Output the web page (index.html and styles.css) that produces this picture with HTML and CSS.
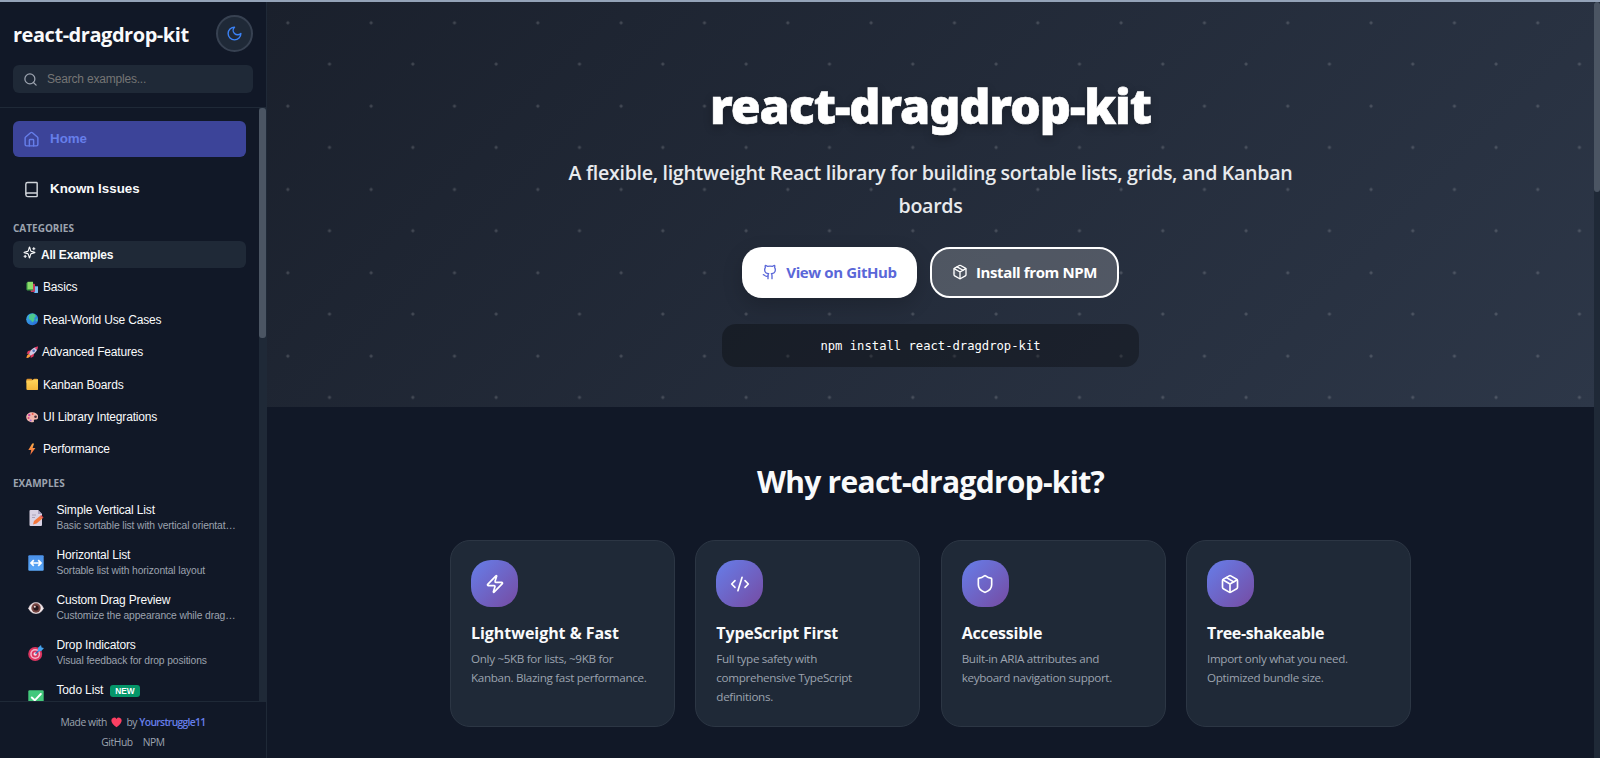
FILE: index.html
```html
<!DOCTYPE html>
<html lang="en">
<head>
<meta charset="utf-8">
<title>react-dragdrop-kit</title>
<link rel="stylesheet" href="styles.css">
</head>
<body>
<svg class="defs" width="0" height="0" aria-hidden="true">
  <symbol id="i-package" viewBox="0 0 24 24"><path d="m7.5 4.27 9 5.15"/><path d="M21 8a2 2 0 0 0-1-1.73l-7-4a2 2 0 0 0-2 0l-7 4A2 2 0 0 0 3 8v8a2 2 0 0 0 1 1.73l7 4a2 2 0 0 0 2 0l7-4A2 2 0 0 0 21 16Z"/><path d="m3.3 7 8.7 5 8.7-5M12 22V12"/></symbol>
  <linearGradient id="g-globe" x1="0" y1="0" x2="1" y2="1"><stop offset="0" stop-color="#3fb4e8"/><stop offset="1" stop-color="#2463d8"/></linearGradient>
  <linearGradient id="g-folder" x1="0" y1="0" x2="0" y2="1"><stop offset="0" stop-color="#ffd65c"/><stop offset="1" stop-color="#f5b73b"/></linearGradient>
  <linearGradient id="g-bolt" x1="0" y1="0" x2="0" y2="1"><stop offset="0" stop-color="#ffb04a"/><stop offset="1" stop-color="#f0603a"/></linearGradient>
  <linearGradient id="g-blue" x1="0" y1="0" x2="0" y2="1"><stop offset="0" stop-color="#4a90e8"/><stop offset="1" stop-color="#5aa8f8"/></linearGradient>
</svg>
<div class="stripe"></div>
<div class="app">
  <aside class="sidebar">
    <header class="side-head">
      <div class="brand-row">
        <div class="brand">react-dragdrop-kit</div>
        <button class="theme"><svg class="ic" viewBox="0 0 24 24" width="17" height="17"><path d="M12 3a6 6 0 0 0 9 9 9 9 0 1 1-9-9Z"/></svg></button>
      </div>
      <div class="search"><svg class="ic" viewBox="0 0 24 24" width="15" height="15"><circle cx="11" cy="11" r="8"/><path d="m21 21-4.3-4.3"/></svg><span>Search examples...</span></div>
    </header>
    <div class="side-body">
      <nav class="nav">
        <a class="link active"><svg class="ic" viewBox="0 0 24 24" width="17" height="17"><path d="M15 21v-8a1 1 0 0 0-1-1h-4a1 1 0 0 0-1 1v8"/><path d="M3 10a2 2 0 0 1 .709-1.528l7-5.999a2 2 0 0 1 2.582 0l7 5.999A2 2 0 0 1 21 10v9a2 2 0 0 1-2 2H5a2 2 0 0 1-2-2z"/></svg><span>Home</span></a>
        <a class="link"><svg class="ic" viewBox="0 0 24 24" width="17" height="17"><path d="M4 19.5v-15A2.5 2.5 0 0 1 6.5 2H19a1 1 0 0 1 1 1v18a1 1 0 0 1-1 1H6.5a1 1 0 0 1 0-5H20"/></svg><span>Known Issues</span></a>
        <h4 class="label">CATEGORIES</h4>
        <a class="all"><svg class="ic" viewBox="0 0 24 24" width="13" height="13"><path d="M9.937 15.5A2 2 0 0 0 8.5 14.063l-6.135-1.582a.5.5 0 0 1 0-.962L8.5 9.936A2 2 0 0 0 9.937 8.5l1.582-6.135a.5.5 0 0 1 .963 0L14.063 8.5A2 2 0 0 0 15.5 9.937l6.135 1.581a.5.5 0 0 1 0 .964L15.5 14.063a2 2 0 0 0-1.437 1.437l-1.582 6.135a.5.5 0 0 1-.963 0z"/><path d="M20 3v4M22 5h-4M4 17v4M6 19H2"/></svg><span>All Examples</span></a>
        <ul class="cats">
          <li><svg viewBox="0 0 16 16"><path fill="#3f86d8" d="M10 6l5.500 1v8L10 16z"/><path fill="#7cc0f5" d="M11.500 7.500l4-.5v8l-4 .5z"/><rect x="6" y="3.500" width="5.500" height="10.500" rx="1" fill="#c93a5f"/><path fill="#3d9c45" d="M.5 2.500 2 1.500h7v10.500H1.500l-1-1z"/><path fill="#8bdc6a" d="M2 1h7v9.500H2z"/></svg>Basics</li>
          <li><svg viewBox="0 0 16 16"><circle cx="8" cy="8" r="7.700" fill="url(#g-globe)"/><path fill="#4cc98c" d="M4 3.500C6 .8 10 .6 11.500 1.700L12.500 5l-2 1.200.5 2.300-2.500 3.500L6.500 9.500 3.500 7.500z"/><path fill="#3fc0a0" d="M12.500 7.500l2.500-.5-.8 3.500-1.700.5z"/></svg>Real-World Use Cases</li>
          <li><svg viewBox="0 0 16 16"><path fill="#e0395f" d="M6.500 5.500 2.500 6.500.8 10l4 .2zM10.500 9.500l-1 4L6 15.300l-.2-4z"/><path fill="#ff9a3c" d="M3.800 10.200C1.500 11 .8 13 .5 15.500c2.500-.3 4.500-1 5.300-3.300z"/><path fill="#cfc8e4" d="M4 10.500C5 6 8.500 1.800 13 1.500l1.500 1.500C14.200 7.500 10 11 5.500 12z"/><path fill="#e83e6a" d="M11 2.200C12.600 1 14.500.6 15.500.5c-.1 1-.5 2.900-1.700 4.500z"/><circle cx="9.800" cy="6.200" r="1.700" fill="#5673b8"/></svg><span class="tight">Advanced Features</span></li>
          <li><svg viewBox="0 0 16 16"><path fill="#dc9430" d="M.5 2.500A1.500 1.500 0 0 1 2 1h5l1.500 1.500L10.500 1H14a1.500 1.500 0 0 1 1.500 1.500V6H.5z"/><path fill="url(#g-folder)" d="M.5 3.200h7.300l2-1.400h5.700v12a1.500 1.500 0 0 1-1.500 1.500H2a1.500 1.500 0 0 1-1.500-1.500z"/></svg>Kanban Boards</li>
          <li><svg viewBox="0 0 16 16"><path fill="#f0b5ab" d="M8 1.500c4.500 0 7.700 2.700 7.700 6 0 2.500-1.800 3.500-3.700 3.300-1.700-.2-2.300.7-1.800 1.900.4 1-.5 1.800-2 1.800C3.500 14.500.3 11.500.3 7.800S3.600 1.500 8 1.500z"/><circle cx="4.200" cy="5.200" r="1.500" fill="#c33fa6"/><circle cx="8.500" cy="3.900" r="1.200" fill="#ee5a4a"/><circle cx="3.300" cy="9" r="1.300" fill="#e0457f"/><circle cx="6" cy="12" r="1.200" fill="#9a62dd"/><circle cx="12.200" cy="7.300" r="1.700" fill="#472e3a"/></svg>UI Library Integrations</li>
          <li><svg viewBox="0 0 16 16"><path fill="url(#g-bolt)" d="M8 .5 3 9h3.700L5.500 15.500 12 6.500H8.500L10.300.5z"/></svg>Performance</li>
        </ul>
        <h4 class="label second">EXAMPLES</h4>
        <ul class="examples">
          <li><svg viewBox="0 0 16 16"><path fill="#d9d2e4" d="M1.500 1a1 1 0 0 1 1-1H10l4 4v11a1 1 0 0 1-1 1H2.500a1 1 0 0 1-1-1z"/><path fill="#a79fbd" d="M10 0l4 4h-4z"/><path d="M4 5h4M4 7.500h3" stroke="#aaa2b8"/><path fill="#f4763c" d="M5 14.500 6 11l6-5 2.500 2.500-6 5z"/><path fill="#d94b4b" d="M12 6l1.200-1 2.300 2.500-1 1z"/></svg><div><b>Simple Vertical List</b><small>Basic sortable list with vertical orientat…</small></div></li>
          <li><svg viewBox="0 0 16 16"><rect x=".3" y=".3" width="15.400" height="15.400" rx="1" fill="url(#g-blue)"/><path d="M3.500 8h9M5.800 5.200 3 8l2.800 2.800M10.200 5.200 13 8l-2.800 2.800" fill="none" stroke="#fff" stroke-width="1.700"/></svg><div><b>Horizontal List</b><small>Sortable list with horizontal layout</small></div></li>
          <li><svg viewBox="0 0 16 16"><path fill="#d8c9ce" d="M.3 8.300C2 4 5 2.200 8 2.200S14 4 15.700 8.300C14 12.300 11 14 8 14S2 12.300.3 8.300z"/><path fill="#f4edf0" d="M1 8.500c2-3.500 4-4.700 7-4.700s5 1.200 7 4.700c-2 3.400-4 4.300-7 4.300S3 11.900 1 8.500z"/><circle cx="8" cy="8" r="4.700" fill="#74423f"/><circle cx="8" cy="8" r="2.600" fill="#26161b"/><circle cx="6.800" cy="6.700" r="1" fill="#e8d5d4"/></svg><div><b>Custom Drag Preview</b><small>Customize the appearance while drag…</small></div></li>
          <li><svg viewBox="0 0 16 16"><circle cx="7.200" cy="9" r="7" fill="#dc3560"/><circle cx="7.200" cy="9" r="5" fill="#f4b6cb"/><circle cx="7.200" cy="9" r="3.500" fill="#dc3560"/><circle cx="7.200" cy="9" r="1.700" fill="#f8dbe4"/><path d="M7.500 8.700 12 4.200" stroke="#2e6fc0" stroke-width="1.300"/><path fill="#45a3ee" d="M10 6V2.700L13 0l.6 2.400L16 3l-2.700 3z"/></svg><div><b>Drop Indicators</b><small>Visual feedback for drop positions</small></div></li>
          <li><svg viewBox="0 0 16 16"><rect x=".3" y=".3" width="15.400" height="15.400" rx="1.200" fill="#43c87c"/><path d="M3.800 7.500 6.800 10.300 12.800 4" fill="none" stroke="#fff" stroke-width="1.900" stroke-linecap="round"/></svg><div><b>Todo List<i class="new">NEW</i></b><small></small></div></li>
        </ul>
      </nav>
      <div class="track"><div class="thumb side"></div></div>
    </div>
    <footer class="side-foot">
      <p>Made with <svg class="heart" viewBox="0 0 16 16" width="11" height="11"><path fill="#fb3f62" d="M8 15C3 11 .5 8.200.5 5A4 4 0 0 1 8 3a4 4 0 0 1 7.500 2c0 3.200-2.500 6-7.500 10z"/></svg> by <a>Yourstruggle11</a></p>
      <p class="links"><span>GitHub</span><span>NPM</span></p>
    </footer>
  </aside>
  <main class="main">
    <section class="hero">
      <h1>react-dragdrop-kit</h1>
      <p class="sub">A flexible, lightweight React library for building sortable lists, grids, and Kanban boards</p>
      <div class="btns">
        <a class="btn white"><svg class="ic" viewBox="0 0 24 24" width="16" height="16"><path d="M15 22v-4a4.8 4.8 0 0 0-1-3.500c3 0 6-2 6-5.500.08-1.250-.27-2.480-1-3.500.28-1.150.28-2.350 0-3.500 0 0-1 0-3 1.500-2.640-.5-5.360-.5-8 0C6 2 5 2 5 2c-.3 1.150-.3 2.350 0 3.500A5.403 5.403 0 0 0 4 9c0 3.500 3 5.500 6 5.500-.39.49-.68 1.050-.85 1.650-.17.6-.22 1.230-.15 1.850v4"/><path d="M9 18c-4.510 2-5-2-7-2"/></svg><span>View on GitHub</span></a>
        <a class="btn glass"><svg class="ic" width="16" height="16"><use href="#i-package"/></svg><span>Install from NPM</span></a>
      </div>
      <code class="cmd">npm install react-dragdrop-kit</code>
    </section>
    <section class="features">
      <h2>Why react-dragdrop-kit?</h2>
      <div class="grid">
        <article class="card"><div class="tile"><svg class="ic" viewBox="0 0 24 24" width="20" height="20"><path d="M4 14a1 1 0 0 1-.78-1.630l9.900-10.200a.5.5 0 0 1 .86.460l-1.920 6.020A1 1 0 0 0 13 10h7a1 1 0 0 1 .78 1.630l-9.900 10.200a.5.5 0 0 1-.86-.460l1.920-6.020A1 1 0 0 0 11 14z"/></svg></div><h3 class="wide">Lightweight &amp; Fast</h3><p>Only ~5KB for lists, ~9KB for<br>Kanban. Blazing fast performance.</p></article>
        <article class="card"><div class="tile"><svg class="ic" viewBox="0 0 24 24" width="20" height="20"><path d="m18 16 4-4-4-4M6 8l-4 4 4 4M14.500 4l-5 16"/></svg></div><h3 class="mid">TypeScript First</h3><p>Full type safety with<br>comprehensive TypeScript<br>definitions.</p></article>
        <article class="card"><div class="tile"><svg class="ic" viewBox="0 0 24 24" width="20" height="20"><path d="M20 13c0 5-3.500 7.500-7.660 8.950a1 1 0 0 1-.67-.010C7.500 20.500 4 18 4 13V6a1 1 0 0 1 1-1c2 0 4.500-1.200 6.240-2.720a1.170 1.170 0 0 1 1.520 0C14.510 3.810 17 5 19 5a1 1 0 0 1 1 1z"/></svg></div><h3 class="mid">Accessible</h3><p>Built-in ARIA attributes and<br>keyboard navigation support.</p></article>
        <article class="card"><div class="tile"><svg class="ic" width="20" height="20"><use href="#i-package"/></svg></div><h3>Tree-shakeable</h3><p>Import only what you need.<br>Optimized bundle size.</p></article>
      </div>
    </section>
  </main>
  <div class="track page"><div class="thumb"></div></div>
</div>
</body>
</html>
```

FILE: styles.css
```css
* { box-sizing: border-box; margin: 0; padding: 0; }
body {
  width: 1600px; height: 758px; overflow: hidden;
  display: flex; flex-direction: column;
  background: #111827; color: #f9fafb;
  font-family: "Open Sans", "Noto Sans", sans-serif;
}
ul { list-style: none; }
.defs { position: absolute; }
.ic { fill: none; stroke: currentColor; stroke-width: 2; stroke-linecap: round; stroke-linejoin: round; flex: none; }
.stripe { height: 2px; background: #94a3b8; flex: none; }
.app { display: flex; flex: 1; min-height: 0; }

/* Sidebar */
.sidebar { width: 267px; display: flex; flex-direction: column; border-right: 1px solid #1f2937; flex: none; font-family: "Liberation Sans", Arial, sans-serif; }
.side-head { height: 106px; padding: 13px 13px 0; border-bottom: 1px solid #1f2937; flex: none; }
.brand-row { display: flex; justify-content: space-between; align-items: center; height: 37px; }
.brand { font: 700 20px/28px "Open Sans", sans-serif; letter-spacing: -0.46px; padding-top: 2px; white-space: nowrap; }
.theme { width: 37px; height: 37px; border-radius: 50%; border: 2px solid #374151; background: #1f2937; color: #3b82f6; display: flex; align-items: center; justify-content: center; }
.search { margin-top: 13px; height: 28px; border-radius: 6px; background: #1f2937; display: flex; align-items: center; gap: 9px; padding-left: 10px; font-size: 12px; letter-spacing: -0.2px; color: #757575; }
.search .ic { color: #9ca3af; }
.side-body { flex: 1; min-height: 0; display: flex; }
.nav { flex: 1; min-width: 0; overflow: hidden; padding: 13px 13px 0; }
.link { display: flex; align-items: center; gap: 10px; height: 36px; padding-left: 10px; margin-bottom: 14px; border-radius: 6px; font-size: 13.33px; font-weight: 700; }
.link span { padding-bottom: 2px; }
.link .ic { color: #d1d5db; }
.link.active, .link.active .ic { color: #667eea; }
.link.active { background: #3c4499; }
.label { font: 700 10px/14px "Open Sans", sans-serif; color: #9ca3af; height: 20px; }
.all { display: flex; align-items: center; gap: 5px; height: 27px; padding-left: 10px; border-radius: 6px; background: #1f2937; font-size: 12px; letter-spacing: -0.2px; font-weight: 700; }
.all .ic { margin-top: -4px; }
.cats { padding-top: 3px; }
.cats li { display: flex; align-items: center; gap: 5px; height: 32.45px; padding-left: 12.5px; font-size: 12px; letter-spacing: -0.17px; }
.cats svg { width: 12.5px; height: 12.5px; }
.tight { margin-left: -1px; }
.label.second { padding-top: 10.5px; height: 30px; }
.examples li { display: flex; align-items: center; gap: 12.5px; height: 45px; padding-left: 15px; }
.examples svg { width: 16px; height: 16px; flex: none; }
.examples b { display: flex; align-items: center; font-weight: 400; font-size: 12px; letter-spacing: -0.15px; line-height: 15px; }
.examples small { display: block; height: 15px; font-size: 10.3px; letter-spacing: -0.12px; line-height: 16px; color: #9ca3af; white-space: nowrap; }
.new { margin-left: 7px; height: 12px; padding: 0 5px; border-radius: 3px; background: #059669; color: #fff; font: 700 8.3px/12px "Liberation Sans", sans-serif; letter-spacing: 0; }
.track { width: 7px; background: #1f2937; flex: none; }
.thumb { height: 190px; background: #4b5563; border-radius: 3px; }
.thumb.side { height: 230px; }
.side-foot { height: 57px; border-top: 1px solid #1f2937; padding-top: 10px; text-align: center; font: 400 10.3px/20px "Open Sans", sans-serif; letter-spacing: -0.42px; color: #9ca3af; flex: none; }
.heart { vertical-align: -2px; margin: 0 2px; }
.side-foot a { color: #667eea; font-weight: 600; letter-spacing: -0.66px; }
.links { display: flex; justify-content: center; gap: 10px; }

/* Hero */
.main { flex: 1; min-width: 0; }
.hero {
  height: 405px; padding-top: 75px; display: flex; flex-direction: column; align-items: center; text-align: center;
  background:
    radial-gradient(circle at 25% 25%, rgba(255,255,255,.16) 1.2px, transparent 1.9px) 0 0 / 83.333px 83.333px,
    radial-gradient(circle at 75% 75%, rgba(255,255,255,.16) 1.2px, transparent 1.9px) 0 -0.4px / 83.333px 83.333px,
    linear-gradient(135deg, #1a202c, #2d3748);
}
h1 { font-family: "Noto Sans", sans-serif; font-size: 48.5px; font-weight: 900; line-height: 56px; letter-spacing: -1.1px; color: #fff; text-shadow: 0 3px 10px rgba(0,0,0,.3); -webkit-text-stroke: 0.6px #fff; }
.sub { width: 750px; margin-top: 24px; font-size: 19.6px; font-weight: 600; line-height: 32.5px; letter-spacing: -0.3px; color: #e8eaed; }
.btns { display: flex; gap: 13px; margin-top: 25px; }
.btn { display: flex; align-items: center; justify-content: center; gap: 8px; height: 50.5px; border-radius: 20px; font-size: 15px; font-weight: 700; letter-spacing: -0.38px; white-space: nowrap; }
.btn.white { width: 175px; background: #fff; color: #5a67d8; box-shadow: 0 7px 20px rgba(0,0,0,.18); }
.btn.glass { width: 189px; border: 2px solid #fff; background: rgba(255,255,255,.2); color: #fff; }
.cmd { width: 417px; height: 43px; margin-top: 26px; border-radius: 14px; background: rgba(0,0,0,.3); font: 400 12.2px/44px "DejaVu Sans Mono", monospace; color: #fff; }

/* Features */
.features { padding: 54.5px 183px 0; }
h2 { font-size: 30px; line-height: 40px; font-weight: 700; letter-spacing: -0.72px; text-align: center; }
.grid { display: grid; grid-template-columns: repeat(4, 225px); justify-content: space-between; margin-top: 38.5px; }
.card { height: 187px; padding: 19px 20px; border: 1px solid #2c3644; border-radius: 20px; background: #1f2937; }
.tile { width: 47px; height: 47px; border-radius: 20px; background: linear-gradient(135deg, #667eea, #764ba2); display: flex; align-items: center; justify-content: center; color: #fff; }
h3 { margin-top: 16px; font-size: 16px; line-height: 20px; font-weight: 700; letter-spacing: -0.37px; white-space: nowrap; }
h3.wide { letter-spacing: -0.04px; }
h3.mid { letter-spacing: -0.16px; }
.card p { margin-top: 6px; font-size: 11.67px; line-height: 19.2px; letter-spacing: -0.33px; color: #9ca3af; white-space: nowrap; }
.track.page { width: 6px; }
```
